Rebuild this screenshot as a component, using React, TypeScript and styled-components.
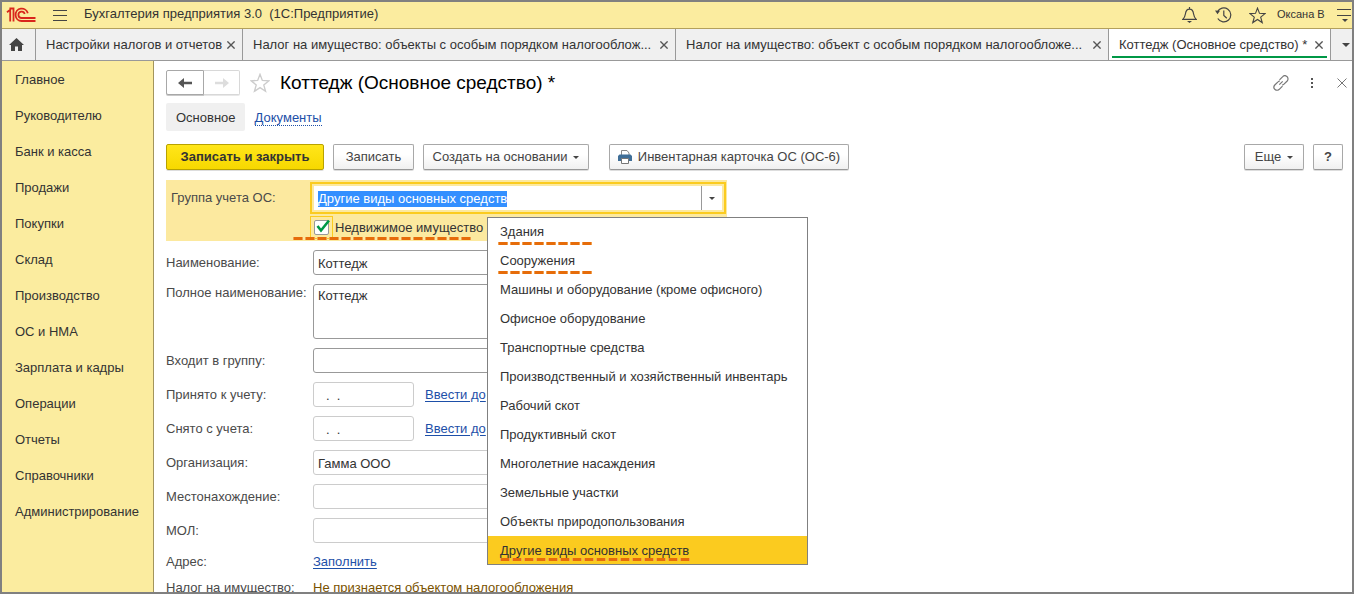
import React, { useEffect, useRef } from "react";
import styled, { createGlobalStyle, css } from "styled-components";

const Global = createGlobalStyle`
  * { box-sizing: border-box; }
  html, body { margin: 0; }
  body, button, input, textarea {
    font-family: "Liberation Sans", Arial, sans-serif;
    font-size: 13px;
    line-height: 16px;
    color: #333;
  }
  button { cursor: pointer; }
`;

const Frame = styled.div`
  display: flex;
  flex-direction: column;
  height: 100vh;
  border: 2px solid #808080;
  background: #fff;
  overflow: hidden;
`;

const TitleBar = styled.header`
  display: flex;
  flex: none;
  align-items: center;
  height: 27px;
  padding-left: 4px;
  background: #fbec9f;
  border-bottom: 1px solid #b3a05c;
`;

const AppTitle = styled.h1`
  flex: 1;
  margin: 0;
  padding-bottom: 2px;
  font-size: 13px;
  font-weight: 400;
  white-space: pre;
`;

const IconButton = styled.button<{ $w: number }>`
  display: flex;
  flex: none;
  align-items: center;
  justify-content: center;
  width: ${(p) => p.$w}px;
  height: 24px;
  padding: 0;
  border: 0;
  background: none;
  color: #444;
`;

const UserName = styled.span`
  width: 62px;
  padding: 0 0 2px 3px;
  font-size: 11px;
  white-space: nowrap;
`;

const TabBar = styled.nav`
  display: flex;
  flex: none;
  align-items: stretch;
  height: 32px;
  background: #f0f0f0;
  border-bottom: 1px solid #999;
`;

const HomeTab = styled.button`
  display: flex;
  align-items: center;
  justify-content: center;
  width: 34px;
  padding: 0 4px 0 0;
  border: 0;
  border-right: 1px solid #999;
  background: none;
`;

const Tab = styled.div<{ $basis?: number; $active?: boolean }>`
  display: flex;
  flex: ${(p) => (p.$basis ? `0 0 ${p.$basis}px` : "1 1 0")};
  align-items: center;
  min-width: 0;
  padding: 1px 4px 0 10px;
  border-right: 1px solid #999;
  ${(p) =>
    p.$active &&
    css`
      background: linear-gradient(#009846, #009846) 3px 27px / calc(100% - 6px) 2px no-repeat #fff;
    `}
`;

const TabLabel = styled.button`
  flex: 1;
  min-width: 0;
  padding: 0;
  border: 0;
  background: none;
  text-align: left;
  white-space: nowrap;
`;

const TabList = styled.button`
  display: flex;
  align-items: center;
  justify-content: flex-end;
  width: 21px;
  padding: 0 2px 0 0;
  border: 0;
  background: none;
`;

const Body = styled.div`
  display: flex;
  flex: 1;
  min-height: 0;
`;

const Sidebar = styled.nav`
  flex: none;
  width: 152px;
  background: #fbec9f;
  border-right: 1px solid #a3955c;
`;

const SideLink = styled.a`
  display: block;
  padding: 11px 0 9px 13px;
  color: #333;
  text-decoration: none;
  white-space: nowrap;
`;

const Content = styled.main`
  flex: 1;
  min-width: 0;
  padding: 8px 0 0 12px;
  overflow: hidden;
`;

const Heading = styled.div`
  display: flex;
  align-items: center;
  height: 27px;
`;

const History = styled.div`
  display: flex;
  width: 74px;
  height: 25px;
`;

const HistoryButton = styled.button`
  display: flex;
  align-items: center;
  justify-content: center;
  width: 38px;
  padding: 0;
  border: 1px solid #a8a8a8;
  border-radius: 2px 0 0 2px;
  background: #fff;
  box-shadow: 0 1px 0 #c8c8c8;
  &:disabled {
    width: 36px;
    border-color: #d8d8d8;
    border-left: 0;
    border-radius: 0 2px 2px 0;
    box-shadow: 0 1px 0 #e8e8e8;
  }
`;

const PageTitle = styled.h2`
  flex: 1;
  margin: 0;
  color: #000;
  font-size: 19px;
  line-height: 24px;
  font-weight: 400;
`;

const Sections = styled.div`
  display: flex;
  align-items: center;
  gap: 10px;
  height: 28px;
  margin-top: 7px;
`;

const CurrentSection = styled.span`
  padding: 7px 9px 5px 10px;
  border-radius: 2px;
  background: #f0f0f0;
`;

const SectionLink = styled.a`
  margin-top: 2px;
  color: #1d4fa8;
  line-height: 14px;
  text-decoration: none;
  border-bottom: 1px dotted #1d4fa8;
`;

const Toolbar = styled.div`
  display: flex;
  align-items: center;
  gap: 9px;
  margin-top: 13px;
  padding-right: 9px;
`;

const Button = styled.button<{ $w: number; $primary?: boolean }>`
  display: flex;
  flex: none;
  align-items: center;
  justify-content: center;
  gap: 6px;
  width: ${(p) => p.$w}px;
  height: 26px;
  padding: 0;
  border: 1px solid #a8a8a8;
  border-bottom-color: #989898;
  border-radius: 2px;
  background: linear-gradient(#fff 40%, #f0f0f0);
  box-shadow: 0 1px 0 #ddd;
  color: #444;
  white-space: nowrap;
  ${(p) =>
    p.$primary &&
    css`
      border-color: #b8a200;
      background: linear-gradient(#ffe61a, #f7d800);
      color: #333;
      font-weight: 700;
    `}
`;

const Spacer = styled.span<{ $w?: number }>`
  flex: ${(p) => (p.$w ? `0 0 ${p.$w}px` : "1")};
`;

const Form = styled.form`
  display: flex;
  flex-direction: column;
  align-items: flex-start;
  gap: 9px;
  margin-top: 10px;
`;

const Highlight = styled.div`
  position: relative;
  display: grid;
  grid-template-columns: 139px 417px;
  row-gap: 2px;
  padding: 2px 0 2px 5px;
  background: #fce99f;
`;

const Label = styled.label`
  color: #4a4a4a;
  white-space: nowrap;
`;

const GroupLabel = styled(Label)`
  padding-top: 8px;
`;

const Combo = styled.div`
  display: flex;
  width: 416px;
  height: 32px;
  padding: 2px;
  border: 2px solid #fbcb1f;
  background: #fce99f;
`;

const ComboInput = styled.input`
  flex: 1;
  min-width: 0;
  padding: 1px 4px 0;
  border: 0;
  outline: 0;
  background: #fff;
  &::selection {
    background: #338fff;
    color: #fff;
  }
`;

const ComboButton = styled.button`
  display: flex;
  align-items: center;
  justify-content: center;
  width: 21px;
  padding: 0;
  border: 0;
  border-left: 1px solid #999;
  background: #fff;
`;

const CheckRow = styled.div`
  display: flex;
  grid-column: 2;
  align-items: center;
  gap: 2px;
`;

const CheckFrame = styled.span`
  display: flex;
  width: 23px;
  height: 23px;
  padding: 3px;
  border: 1px solid #fbcb1f;
`;

const CheckBox = styled.span`
  position: relative;
  width: 15px;
  height: 15px;
  border: 1px solid #999;
  border-radius: 2px;
  background: #fff;
  input {
    width: 13px;
    height: 13px;
    margin: 0;
    opacity: 0;
  }
  svg {
    position: absolute;
    left: 1px;
    top: -2px;
    pointer-events: none;
  }
`;

const Dashes = styled.span<{ $x: number; $y: number; $w: number }>`
  position: absolute;
  left: ${(p) => p.$x}px;
  top: ${(p) => p.$y}px;
  width: ${(p) => p.$w}px;
  height: 3px;
  background: repeating-linear-gradient(90deg, #f0a050 0 1px, #e66c0a 1px 9px, #f0a050 9px 10px, transparent 10px 12px);
`;

const Menu = styled.ul`
  position: absolute;
  z-index: 1;
  left: 321px;
  top: 37px;
  width: 321px;
  margin: 0;
  padding: 0;
  list-style: none;
  background: #fff;
  border: 1px solid #808080;
`;

const MenuItem = styled.li<{ $selected?: boolean }>`
  position: relative;
  padding: 7px 12px 6px;
  background: ${(p) => (p.$selected ? "#fbcb1f" : "none")};
  white-space: nowrap;
  &:first-child {
    padding-top: 6px;
  }
  &:last-child {
    padding-bottom: 5px;
  }
`;

const Row = styled.div<{ $tall?: boolean }>`
  display: grid;
  grid-template-columns: 147px 411px;
  align-items: ${(p) => (p.$tall ? "start" : "center")};
  ${Label} {
    padding-top: ${(p) => (p.$tall ? 1 : 0)}px;
  }
`;

const fieldBox = css<{ $strong?: boolean }>`
  height: 25px;
  padding: 2px 4px 0;
  border: 1px solid ${(p) => (p.$strong ? "#999" : "#ccc")};
  border-radius: 3px;
  background: #fff;
  outline: 0;
`;

const Field = styled.input<{ $strong?: boolean }>`
  ${fieldBox}
  width: 100%;
`;

const Area = styled.textarea<{ $strong?: boolean }>`
  ${fieldBox}
  display: block;
  width: 100%;
  height: 55px;
  padding-top: 3px;
  resize: none;
`;

const DateCell = styled.div`
  display: flex;
  align-items: center;
  gap: 11px;
  white-space: nowrap;
`;

const DateField = styled.input`
  ${fieldBox}
  width: 101px;
  padding-left: 12px;
  white-space: pre;
`;

const Link = styled.a`
  color: #1d4fa8;
  text-decoration: underline;
  text-underline-offset: 2px;
`;

const Note = styled.span`
  color: #7a5200;
`;

const Tail = styled.div`
  display: flex;
  flex-direction: column;
  gap: 10px;
  padding-top: 2px;
`;

const Caret = ({ size = 6 }: { size?: number }) => (
  <svg width={size} height={size / 2} viewBox="0 0 6 3" fill="#444" aria-hidden>
    <path d="M0 0h6L3 3z" />
  </svg>
);

const Cross = ({ size, color = "#555" }: { size: number; color?: string }) => (
  <svg width={size} height={size} viewBox="0 0 10 10" stroke={color} strokeWidth={size > 8 ? 1 : 1.7} fill="none" aria-hidden>
    <path d="M.5.5l9 9M9.5.5l-9 9" />
  </svg>
);

const Logo = () => (
  <svg width="30" height="16" viewBox="0 0 30 16" fill="none" stroke="#d9261c" strokeWidth="1.8" aria-label="1С">
    <path d="M1 5.200L4.200 2.800V14.500M3.400 1.500H7.500V14.500" />
    <path d="M21.800 6.300A6.200 6.200 0 1 0 15.600 14H29.500" />
    <path d="M18.700 7A3.200 3.200 0 1 0 15.600 11H29.500" />
  </svg>
);

const Arrow = ({ back, color }: { back?: boolean; color: string }) => (
  <svg width="14" height="10" viewBox="0 0 14 10" fill={color} aria-hidden>
    {back ? <path d="M0 5l6-5v3.800h8v2.400H6V10z" /> : <path d="M14 5L8 0v3.800H0v2.400h8V10z" />}
  </svg>
);

const Star = ({ size, color }: { size: number; color: string }) => (
  <svg width={size} height={size} viewBox="0 0 18 18" fill="none" stroke={color} strokeWidth="1.2" aria-hidden>
    <path d="M9 1.200l2.100 5.500 5.900.300-4.600 3.700 1.600 5.800L9 13.200l-5 3.300 1.600-5.800L1 7l5.900-.300z" />
  </svg>
);

const sections = [
  "Главное", "Руководителю", "Банк и касса", "Продажи", "Покупки", "Склад", "Производство",
  "ОС и НМА", "Зарплата и кадры", "Операции", "Отчеты", "Справочники", "Администрирование",
];

const tabs = [
  { label: "Настройки налогов и отчетов", basis: 207 },
  { label: "Налог на имущество: объекты с особым порядком налогооблож..." },
  { label: "Налог на имущество: объект с особым порядком налогообложе..." },
  { label: "Коттедж (Основное средство) *", basis: 222, active: true },
];

const groups: { label: string; mark?: [number, number, number] }[] = [
  { label: "Здания", mark: [10, 24, 94] },
  { label: "Сооружения", mark: [10, 25, 94] },
  { label: "Машины и оборудование (кроме офисного)" },
  { label: "Офисное оборудование" },
  { label: "Транспортные средства" },
  { label: "Производственный и хозяйственный инвентарь" },
  { label: "Рабочий скот" },
  { label: "Продуктивный скот" },
  { label: "Многолетние насаждения" },
  { label: "Земельные участки" },
  { label: "Объекты природопользования" },
  { label: "Другие виды основных средств", mark: [12, 22, 190] },
];

export default function App() {
  const combo = useRef<HTMLInputElement>(null);
  useEffect(() => {
    combo.current?.focus();
    combo.current?.select();
  }, []);

  return (
    <>
      <Global />
      <Frame>
        <TitleBar>
          <Logo />
          <IconButton $w={48} aria-label="Меню">
            <svg width="14" height="11" viewBox="0 0 14 11" stroke="#444" aria-hidden>
              <path d="M0 .5h14M0 5.500h14M0 10.500h14" />
            </svg>
          </IconButton>
          <AppTitle>{"Бухгалтерия предприятия 3.0  (1С:Предприятие)"}</AppTitle>
          <IconButton $w={34} aria-label="Уведомления">
            <svg width="15" height="16" viewBox="0 0 15 16" fill="none" stroke="#444" strokeWidth="1.2" aria-hidden>
              <path d="M7.500 0v2M.8 12.400h13.400C12.200 10.500 11.900 9 11.600 7 11.200 4 9.800 2.200 7.500 2.200S3.800 4 3.400 7C3.100 9 2.800 10.500.8 12.400z" />
              <path d="M5 14h5L7.500 16z" fill="#444" stroke="none" />
            </svg>
          </IconButton>
          <IconButton $w={34} aria-label="История">
            <svg width="17" height="16" viewBox="0 0 17 16" fill="none" stroke="#444" strokeWidth="1.2" aria-hidden>
              <path d="M2.400 5A7 7 0 1 1 2.800 11.500M8.800 3.500v5l3 2.800" />
              <path d="M0 3.500l5 .200-2.500 3.500z" fill="#444" stroke="none" />
            </svg>
          </IconButton>
          <IconButton $w={34} aria-label="Избранное">
            <Star size={17} color="#444" />
          </IconButton>
          <UserName>Оксана В</UserName>
          <IconButton $w={16} aria-label="Сервис">
            <svg width="14" height="13" viewBox="0 0 14 13" stroke="#444" aria-hidden>
              <path d="M0 .5h14M0 6.500h14" />
              <path d="M5 10h6l-3 3z" fill="#444" stroke="none" />
            </svg>
          </IconButton>
        </TitleBar>

        <TabBar>
          <HomeTab aria-label="Начальная страница">
            <svg width="15" height="13" viewBox="0 0 15 13" fill="#444" aria-hidden>
              <path d="M7.500 0L15 7h-2v6H9V8.500H6V13H2V7H0z" />
            </svg>
          </HomeTab>
          {tabs.map((t) => (
            <Tab key={t.label} $basis={t.basis} $active={t.active}>
              <TabLabel>{t.label}</TabLabel>
              <IconButton $w={14} aria-label="Закрыть вкладку">
                <Cross size={8} />
              </IconButton>
            </Tab>
          ))}
          <TabList aria-label="Все вкладки">
            <Caret size={8} />
          </TabList>
        </TabBar>

        <Body>
          <Sidebar>
            {sections.map((s) => (
              <SideLink key={s} href="#">{s}</SideLink>
            ))}
          </Sidebar>

          <Content>
            <Heading>
              <History>
                <HistoryButton aria-label="Назад"><Arrow back color="#555" /></HistoryButton>
                <HistoryButton disabled aria-label="Вперед"><Arrow color="#ddd" /></HistoryButton>
              </History>
              <IconButton $w={40} aria-label="В избранное">
                <Star size={20} color="#ccc" />
              </IconButton>
              <PageTitle>Коттедж (Основное средство) *</PageTitle>
              <IconButton $w={22} aria-label="Ссылка">
                <svg width="16" height="16" viewBox="0 0 16 16" fill="none" stroke="#777" strokeWidth="1.2" aria-hidden>
                  <path d="M6.500 4.800l3-3a2.900 2.900 0 0 1 4.700 4.200l-3.200 3.200a2.600 2.600 0 0 1-2 .8M9.500 11.200l-3 3a2.900 2.900 0 0 1-4.700-4.200L5 6.800a2.600 2.600 0 0 1 2-.8" />
                  <path d="M6.300 9.700l3.400-3.400" />
                </svg>
              </IconButton>
              <IconButton $w={40} aria-label="Действия">
                <svg width="2" height="10" viewBox="0 0 2 10" fill="#555" aria-hidden>
                  <path d="M0 0h2v2H0zM0 4h2v2H0zM0 8h2v2H0z" />
                </svg>
              </IconButton>
              <IconButton $w={20} aria-label="Закрыть">
                <Cross size={10} color="#777" />
              </IconButton>
            </Heading>

            <Sections>
              <CurrentSection>Основное</CurrentSection>
              <SectionLink href="#">Документы</SectionLink>
            </Sections>

            <Toolbar>
              <Button $w={158} $primary>Записать и закрыть</Button>
              <Button $w={81}>Записать</Button>
              <Button $w={166}>Создать на основании <Caret /></Button>
              <Spacer $w={2} />
              <Button $w={240}>
                <svg width="14" height="14" viewBox="0 0 14 14" aria-hidden>
                  <path d="M3.500 5V.5h5.500L11 3v2" fill="#fff" stroke="#888" />
                  <path d="M0 6l1.500-1.500h11L14 6v5H0z" fill="#3f6e97" />
                  <path d="M3.500 8.500h7v5h-7z" fill="#fff" stroke="#777" />
                </svg>
                Инвентарная карточка ОС (ОС-6)
              </Button>
              <Spacer />
              <Button $w={60}>Еще <Caret /></Button>
              <Button $w={30}><b>?</b></Button>
            </Toolbar>

            <Form>
              <Highlight>
                <GroupLabel htmlFor="group">Группа учета ОС:</GroupLabel>
                <Combo>
                  <ComboInput id="group" ref={combo} defaultValue="Другие виды основных средств" />
                  <ComboButton type="button" aria-label="Открыть список"><Caret /></ComboButton>
                </Combo>
                <CheckRow>
                  <CheckFrame>
                    <CheckBox>
                      <input type="checkbox" id="realty" defaultChecked />
                      <svg width="14" height="14" viewBox="0 0 14 14" fill="none" stroke="#009846" strokeWidth="2.600" aria-hidden>
                        <path d="M1.500 7l3.500 4.500L13 1.500" />
                      </svg>
                    </CheckBox>
                  </CheckFrame>
                  <label htmlFor="realty">Недвижимое имущество</label>
                </CheckRow>
                <Dashes $x={127} $y={57} $w={178} />
                <Menu>
                  {groups.map((g, i) => (
                    <MenuItem key={g.label} $selected={i === groups.length - 1}>
                      {g.label}
                      {g.mark && <Dashes $x={g.mark[0]} $y={g.mark[1]} $w={g.mark[2]} />}
                    </MenuItem>
                  ))}
                </Menu>
              </Highlight>

              <Row>
                <Label htmlFor="name">Наименование:</Label>
                <Field id="name" $strong defaultValue="Коттедж" />
              </Row>
              <Row $tall>
                <Label htmlFor="full">Полное наименование:</Label>
                <Area id="full" $strong defaultValue="Коттедж" />
              </Row>
              <Row>
                <Label htmlFor="parent">Входит в группу:</Label>
                <Field id="parent" $strong />
              </Row>
              <Row>
                <Label htmlFor="accepted">Принято к учету:</Label>
                <DateCell>
                  <DateField id="accepted" defaultValue=".  ." />
                  <Link href="#">Ввести до</Link>
                </DateCell>
              </Row>
              <Row>
                <Label htmlFor="removed">Снято с учета:</Label>
                <DateCell>
                  <DateField id="removed" defaultValue=".  ." />
                  <Link href="#">Ввести до</Link>
                </DateCell>
              </Row>
              <Row>
                <Label htmlFor="org">Организация:</Label>
                <Field id="org" defaultValue="Гамма ООО" />
              </Row>
              <Row>
                <Label htmlFor="place">Местонахождение:</Label>
                <Field id="place" />
              </Row>
              <Row>
                <Label htmlFor="mol">МОЛ:</Label>
                <Field id="mol" />
              </Row>
              <Tail>
                <Row>
                  <Label as="span">Адрес:</Label>
                  <Link href="#">Заполнить</Link>
                </Row>
                <Row>
                  <Label as="span">Налог на имущество:</Label>
                  <Note>Не признается объектом налогообложения</Note>
                </Row>
              </Tail>
            </Form>
          </Content>
        </Body>
      </Frame>
    </>
  );
}
